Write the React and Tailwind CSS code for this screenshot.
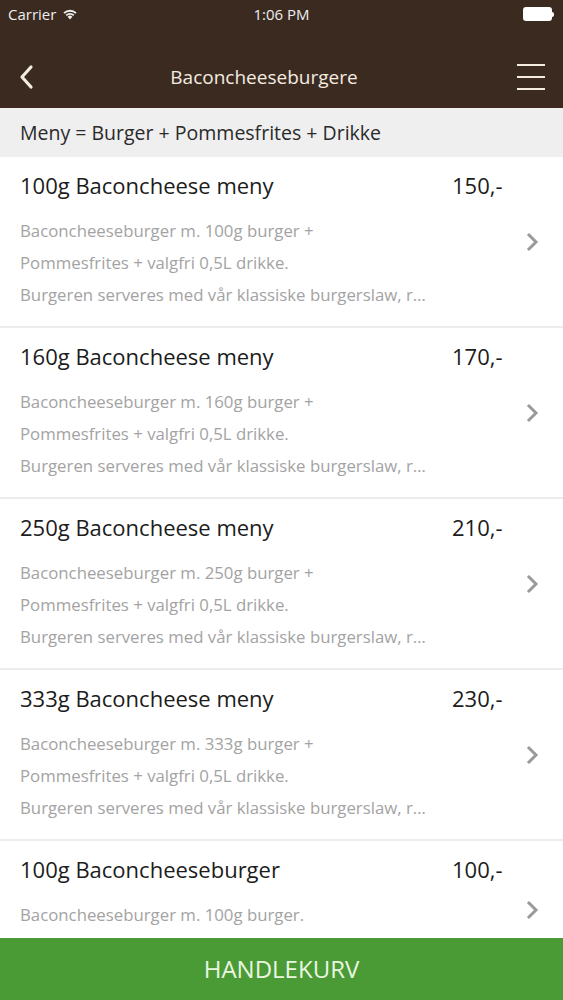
const items = [
  {
    title: "100g Baconcheese meny",
    price: "150,-",
    lines: [
      "Baconcheeseburger m. 100g burger +",
      "Pommesfrites + valgfri 0,5L drikke.",
      "Burgeren serveres med vår klassiske burgerslaw, r…",
    ],
  },
  {
    title: "160g Baconcheese meny",
    price: "170,-",
    lines: [
      "Baconcheeseburger m. 160g burger +",
      "Pommesfrites + valgfri 0,5L drikke.",
      "Burgeren serveres med vår klassiske burgerslaw, r…",
    ],
  },
  {
    title: "250g Baconcheese meny",
    price: "210,-",
    lines: [
      "Baconcheeseburger m. 250g burger +",
      "Pommesfrites + valgfri 0,5L drikke.",
      "Burgeren serveres med vår klassiske burgerslaw, r…",
    ],
  },
  {
    title: "333g Baconcheese meny",
    price: "230,-",
    lines: [
      "Baconcheeseburger m. 333g burger +",
      "Pommesfrites + valgfri 0,5L drikke.",
      "Burgeren serveres med vår klassiske burgerslaw, r…",
    ],
  },
  {
    title: "100g Baconcheeseburger",
    price: "100,-",
    lines: ["Baconcheeseburger m. 100g burger."],
    short: true,
  },
];

function Chevron() {
  return (
    <svg width="14" height="20" viewBox="0 0 14 20" fill="none">
      <path d="M3 3l7 7-7 7" stroke="#9a9a9a" strokeWidth="3" strokeLinecap="square" />
    </svg>
  );
}

function Item({ item }) {
  return (
    <div
      className={
        "flex border-b-2 border-[#ececec] bg-white shrink-0 " +
        (item.short ? "h-[140px]" : "h-[171px]")
      }
    >
      <div className="flex-1 pl-5">
        <div className="flex h-[56px] items-center">
          <div className="flex-1 text-[22px] text-[#1c1c1c]">{item.title}</div>
          <div className="w-[74px] text-[22px] text-[#1c1c1c]">{item.price}</div>
        </div>
        <div className="text-[16.8px] leading-[32px] text-[#a3a3a3] pt-[2px]">
          {item.lines.map((l) => (
            <div key={l}>{l}</div>
          ))}
        </div>
      </div>
      <div className="w-[37px] flex items-center">
        <Chevron />
      </div>
    </div>
  );
}

export default function App() {
  return (
    <div
      className="w-[563px] h-[1000px] flex flex-col overflow-hidden bg-white"
      style={{ fontFamily: '"Open Sans", "Noto Sans", sans-serif' }}
    >
      {/* top bar */}
      <div className="bg-[#3b2a20] h-[108px] shrink-0 text-[#f4ebe1]">
        <div className="h-[46px] flex items-start pt-[3px] px-2 relative">
          <div className="flex items-center gap-[6px] text-[15px] leading-[22px] text-[#eee]">
            Carrier
            <svg width="16" height="12" viewBox="0 0 16 12">
              <path d="M8 11.5L5.6 8.8a3.4 3.4 0 0 1 4.8 0z" fill="#eee" />
              <path d="M3.6 6.8a6.3 6.3 0 0 1 8.8 0l-1.2 1.3a4.6 4.6 0 0 0-6.4 0z" fill="#eee" />
              <path d="M1.4 4.5a9.5 9.5 0 0 1 13.2 0l-1.2 1.3a7.8 7.8 0 0 0-10.8 0z" fill="#eee" />
            </svg>
          </div>
          <div className="absolute left-0 right-0 top-[3px] text-center text-[15px] leading-[22px] font-medium text-[#eee]">
            1:06 PM
          </div>
          <div className="ml-auto mt-[4px] mr-[1px] flex items-center">
            <div className="w-[29px] h-[14px] rounded-[3px] bg-white" />
            <div className="w-[2px] h-[5px] bg-white rounded-r-sm" />
          </div>
        </div>
        <div className="h-[62px] flex items-center px-[18px]">
          <svg width="18" height="26" viewBox="0 0 18 26" fill="none">
            <path d="M13 3L4 13l9 10" stroke="#f4ebe1" strokeWidth="3.2" strokeLinecap="round" strokeLinejoin="round" />
          </svg>
          <div className="flex-1 text-center text-[19px] pr-[25px]">Baconcheeseburgere</div>
          <div className="flex flex-col gap-[10px] w-[28px]">
            <div className="h-[2px] bg-[#f4ebe1]" />
            <div className="h-[2px] bg-[#f4ebe1]" />
            <div className="h-[2px] bg-[#f4ebe1]" />
          </div>
        </div>
      </div>

      {/* subheader */}
      <div className="h-[49px] shrink-0 bg-[#efefef] flex items-center pl-5 text-[19.5px] text-[#2a2a2a]">
        Meny = Burger + Pommesfrites + Drikke
      </div>

      {/* list */}
      <div className="flex-1 flex flex-col overflow-hidden">
        {items.map((item) => (
          <Item key={item.title} item={item} />
        ))}
      </div>

      {/* cart button */}
      <div className="h-[62px] shrink-0 bg-[#4a9a36] flex items-center justify-center text-[24px] text-[#eaf6e0]">
        HANDLEKURV
      </div>
    </div>
  );
}
